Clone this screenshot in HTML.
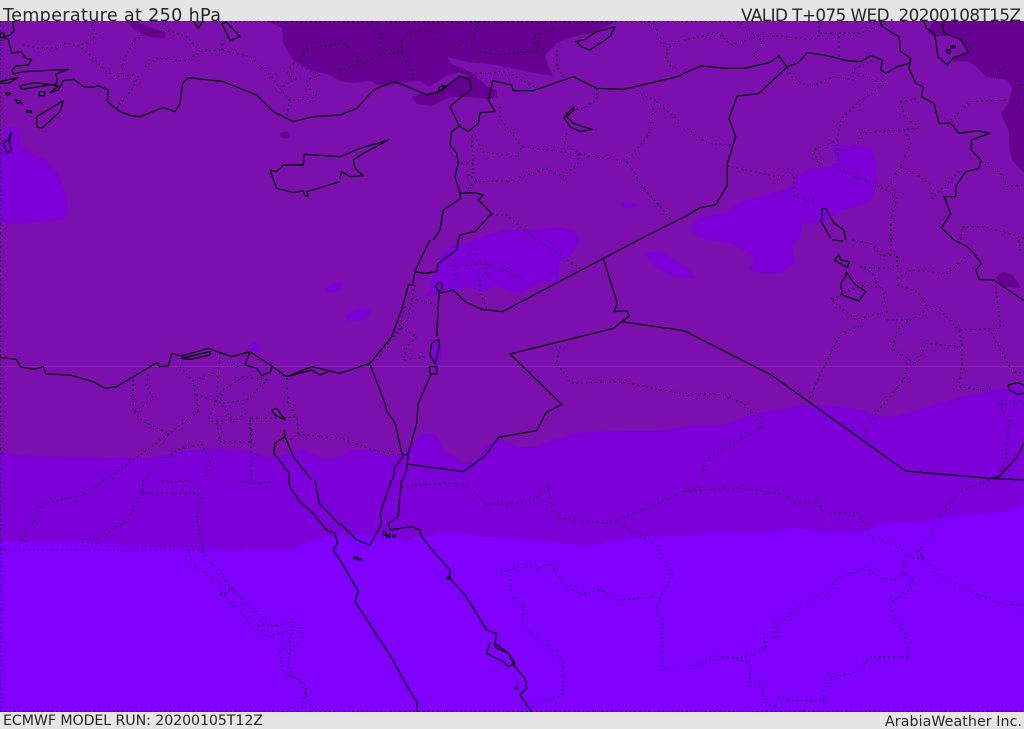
<!DOCTYPE html>
<html><head><meta charset="utf-8"><title>Temperature at 250 hPa</title>
<style>
html,body{margin:0;padding:0;background:#e5e5e5;width:1024px;height:729px;overflow:hidden}
svg{display:block}
path,polygon,ellipse{vector-effect:non-scaling-stroke}
.c{fill:none;stroke:#000;stroke-width:1.25;stroke-linejoin:round}
.d{fill:none;stroke:#000;stroke-width:1.2;stroke-dasharray:1.3 3.4;shape-rendering:crispEdges}
text{font-family:"DejaVu Sans","Liberation Sans",sans-serif;fill:#262626}
</style></head><body>
<svg width="1024" height="729" viewBox="0 0 1024 729" xmlns="http://www.w3.org/2000/svg">
<rect width="1024" height="729" fill="#e5e5e5"/>
<text x="3" y="21" font-size="17.6" textLength="218">Temperature at 250 hPa</text>
<text x="741" y="21" font-size="16.8" textLength="280">VALID T+075 WED. 20200108T15Z</text>
<text x="3" y="725" font-size="14.2" textLength="260">ECMWF MODEL RUN: 20200105T12Z</text>
<text x="885" y="726" font-size="14.2" textLength="137">ArabiaWeather Inc.</text>
<clipPath id="m"><rect x="0" y="21" width="1024" height="691"/></clipPath>
<g clip-path="url(#m)">
<rect x="0" y="21" width="1024" height="691" fill="#7b10ae"/>
<!-- dark north -->
<g fill="#660090">
<polygon points="125,21 135,30 150,37 165,38 166,33 150,27 135,21"/>
<polygon points="267,21 282,28 283,43 293,60 310,70 330,75 340,81 353,83 370,81 383,87 403,82 420,81 429,87 446,76 458,72 467,75 480,77 452,64 447,57 467,62 490,64 540,74 553,76 548,66 545,55 557,43 573,37 593,33 613,23 616,21"/>
<polygon points="412,97 420,94 429,93 440,90 457,77 472,75 480,80 488,87 497,90 497,97 488,99 470,97 450,97 431,106 417,104"/>
<polygon points="934,21 927,32 934,37 947,35 960,39 969,52 955,57 953,62 967,61 977,67 986,77 1007,80 1012,88 1009,103 1001,113 1009,132 1009,145 1012,160 1024,173 1024,21"/>
<ellipse cx="285" cy="135" rx="5.500" ry="3.500"/>
<polygon points="996,278 1000,273 1005,272 1012,275 1018,282 1021,288 1008,287 1000,285"/>
</g>
<!-- mid band -->
<g fill="#7e00d8">
<polygon points="0,452 17,455 67,457 127,458 150,458 187,450 200,450 227,449 253,452 270,458 283,455 303,449 323,459 340,457 350,450 373,450 390,457 403,453 420,435 435,433 443,450 465,463 480,457 485,447 498,438 517,447 533,447 553,440 583,432 623,431 657,431 684,426 717,426 737,420 754,413 777,410 801,405 834,406 861,410 881,417 894,417 924,408 957,398 991,390 1024,385 1024,712 0,712"/>
<polygon points="0,155 3,133 7,127 15,127 20,133 20,145 30,153 43,158 58,173 67,197 68,212 63,220 47,221 20,224 0,222"/>
<polygon points="690,230 693,224 700,218 727,212 740,202 777,192 793,187 797,175 811,168 831,167 837,160 832,145 857,146 871,147 875,160 877,183 872,198 861,206 841,210 831,217 822,223 802,223 800,237 792,247 795,263 782,273 767,274 748,270 753,263 752,255 733,244 700,238"/>
<polygon points="478,238 503,230 530,230 560,227 575,231 581,240 573,253 560,263 558,273 560,282 540,282 522,293 510,292 497,285 483,292 468,287 453,290 438,293 425,297 430,288 433,275 438,263 443,253 453,245 468,243"/>
<polygon points="645,255 650,252 660,251 675,260 690,270 697,279 673,277 657,268"/>
<ellipse cx="629" cy="205" rx="8.500" ry="2.800"/>
<ellipse cx="334" cy="288" rx="9" ry="4" transform="rotate(-22 334 288)"/>
<ellipse cx="358" cy="315" rx="13" ry="5.500" transform="rotate(-15 358 315)"/>
<ellipse cx="255" cy="347" rx="5" ry="5"/>
<ellipse cx="437" cy="352" rx="5" ry="14"/>
</g>
<!-- brightest -->
<polygon fill="#7f00ff" points="0,542 33,542 77,542 113,545 167,548 207,549 240,551 248,548 270,551 293,549 307,543 323,538 333,536 340,537 360,535 377,535 397,537 408,541 415,537 430,537 447,532 463,533 480,537 500,537 540,541 590,546 617,540 640,537 684,536 714,532 761,533 797,528 824,532 857,532 891,522 921,522 957,515 1001,513 1024,505 1024,712 0,712"/>
<rect x="0" y="366" width="1024" height="1" fill="#9a4ad0" opacity=".35"/>
<path class="d" d="M.5,21V712M0,21.500H1024M0,711.500H1024"/>
<!-- tile joins -->
<path class="c" d="M638,240L684,217M680,330L684,331M680,76L684,73M340,115L342,115M340,157L340,157"/>

<!-- tile 1 -->
<g transform="scale(.33333)">
<path class="d" d="M70,135L120,145 165,145 200,128 240,140 285,180 320,215 350,230 410,225M275,75L290,100 270,125 240,135M500,90L440,100 400,125 365,195 370,222M435,200L470,175 560,183 600,155 665,150 750,170 815,230 840,265M495,70L490,90M505,92L560,110 600,155M665,150L665,120M880,190L860,220 890,235 840,265 870,300 930,298 950,285 925,265 920,240 960,225M960,225L885,190M880,190L930,145 1020,130M415,228L395,270 350,325M868,300L860,355"/>
<path class="c" d="M38,64L42,92 30,106 5,112 25,118 35,160 62,155 78,175 95,178 85,195 48,198 35,212 40,222 70,215 205,208 168,222 172,243 165,255 100,248 60,258 65,268 150,255 175,258 150,278 175,270 190,242 222,238 250,260 280,262 295,257 325,270 322,305 360,335 395,347 420,350 490,322 525,335 540,310 548,250 565,233 670,245 770,285 820,335 880,365 940,350 1020,345"/>
<path class="c" d="M110,350L190,302 180,335 125,385 110,380ZM0,245L55,232 25,250 0,250ZM18,278h12v6h-12ZM118,275h16v12h-16ZM45,298l15,5 6,8-15,-3ZM80,332h14v5h-14ZM580,64L595,85 608,64M665,70L680,67 720,110 690,122ZM33,398L25,420 10,430 20,458 35,450 28,430ZM912,463L910,495 850,495 830,515 810,510 830,565 880,578 910,572 915,588 925,588 920,575 1020,545M912,463L1020,470M0,100h12v12h-12Z"/>
</g>
<!-- tile 2 -->
<g transform="translate(340,0) scale(.33333)">
<path class="d" d="M0,120L30,145 70,190M0,210L70,190 115,165 185,155 215,210 220,245M185,155L185,115 240,90 300,100 305,64M80,64L125,105 115,160M415,64L410,100 360,130 355,150M395,130L400,150 470,165 610,150M640,85L580,110 595,135M610,150L580,125M350,215L440,220 500,215 590,265M650,150L650,200 670,230M900,64L950,85 955,120 985,155 975,170 1005,220M990,140L1020,120M770,265L770,300 730,325 695,330M890,280L945,300 925,405 860,485 715,462 545,440 530,470 425,455 405,405 395,410 400,490 355,490M950,305L1020,365M860,485L885,520 900,550 990,655M715,462L715,490 670,530 620,505 510,542 430,545 410,540 380,570M400,490L400,520 385,525 410,540M680,400L675,430 715,462M480,320L480,355 530,420 545,440M455,645L500,645 540,680 590,720"/>
<path class="c" d="M0,345L50,325 100,270 160,245 190,255 262,285 300,275 360,228 390,240 395,270 370,285 330,320 358,378 335,395 330,435 350,460 355,490 345,530 360,580 362,595 310,630 300,690 280,720M358,378L385,395 415,370 420,338 465,335 445,300 458,242 515,255 520,272 580,272 700,230 770,265 850,268 1020,228M360,580L405,578 430,585 415,600 455,640 405,695 360,705 355,720M700,320L672,352 690,380 720,395 757,388 730,380 700,370 680,350 702,330ZM708,125L735,118 770,95 825,80 810,110 750,150 725,140ZM296,262l18,-6-8,14-10,2ZM0,470L60,445 145,420 70,460 40,480 45,505 70,528 30,530 5,515 0,535"/>
</g>
<!-- tile 3 -->
<g transform="translate(684,0) scale(.33333)">
<path class="d" d="M0,120L100,100 145,135 220,110 290,108 390,120 410,100 530,100 590,75M160,64L225,110 235,140 205,165 230,185M405,64L405,100M465,110L465,170M310,205L330,240 380,260 450,230 510,240 505,210 570,180M510,215L600,255 530,300 470,360 460,420 390,450 405,500M460,420L465,505 605,570 650,500 700,525 740,555 745,595 830,510M530,400L520,435 460,460M530,400L700,385 660,390 680,430 650,500M650,305L700,295M650,305L660,350 705,380M10,385L70,430 150,435M130,498L280,530 330,525 330,590 390,605M605,570L640,590 620,660 620,720M800,360L860,305 980,300 1020,315M890,485L950,520 970,560 1020,555M830,720L835,680 900,680 1020,715M920,225L960,205 1000,240 1020,270"/>
<path class="c" d="M0,220L50,198 130,205 180,205 255,188 285,168 308,200 340,190 370,158 420,165 490,182 530,185 560,167 595,180 590,210 605,220 640,200 675,190M310,200L225,280 160,288 135,355 155,410 130,490 130,555 95,615 50,622 0,652M590,64L595,80 645,110 650,155 680,175 675,205 695,250 718,260 712,290 750,310 765,370 800,370 825,400 880,392 917,400 862,420 862,450 890,480 885,505 845,515 815,560 815,590 780,590 800,640 772,683 800,710 810,720M720,64L728,85 750,100 755,120 762,170 790,195 810,172 853,157 830,118 780,100 775,68M800,138h14v6h-14ZM788,150h10v10h-10ZM415,625L425,625 450,670 480,690 485,720M415,625L412,665 440,715"/>
</g>
<!-- tile 4 -->
<g transform="translate(0,240) scale(.33333)">
<path class="d" d="M400,420L400,515 430,545 505,580M405,515L460,475 440,440 445,395M540,380L580,425 585,465M585,420L650,395M660,340L650,480 625,540M590,465L670,490 740,480 800,420M800,420L730,410 670,450 660,485M590,465L595,515M660,485L700,545 745,515M635,545L700,540M650,550L660,605 755,605 750,535 835,535 890,530 895,580 870,600M895,583L1020,595M750,535L755,720M595,515L320,720M430,720L530,630 605,612 630,660 620,720M690,360L720,385M815,380L860,415 865,490 890,530"/>
<path class="c" d="M0,352L50,358 60,380 100,388 130,380 138,402 210,405 280,425 315,445 350,440 470,368 480,380 505,378 515,340 545,348 625,325 695,350 750,335 815,378 860,410 935,380 1020,400M545,355L630,335 630,345 570,358ZM750,335L735,375 770,385 785,407 812,395 815,378M815,510L830,505 855,540 825,525ZM853,570L855,590 880,650 935,720M855,590L825,610 822,640 868,700 868,720M860,410L880,405 935,390 960,405 985,395M480,380L505,378"/>
</g>
<!-- tile 5 -->
<g transform="translate(340,240) scale(.33333)">
<path class="d" d="M110,360L180,260 230,290 200,320 190,360 260,350M225,135L215,175 290,195M195,200L180,260M215,175L205,235 165,290M340,60L350,120M350,80L430,70 520,100 560,130M420,120L420,155 440,205M440,70L440,100 415,120M395,25L395,40M410,25L410,40M600,5L720,85M660,320L650,370 695,430 840,425 1020,460M10,597L100,630 180,648"/>
<path class="c" d="M270,0L240,60 225,95 218,135 205,135 185,210 155,290 90,370 0,400M225,95L255,100 290,95 295,70 350,30 355,0M297,160L290,290M290,300L275,310 270,345 285,370 298,320 298,300ZM268,380L290,380 290,402 270,402ZM272,405L235,490 230,550 205,640M295,160L340,150 375,185 425,208 487,215 895,0M790,55L832,190 822,215 860,212 868,228 820,265 510,342 665,493 618,518 590,572 475,592 435,648 370,695 200,672M845,245L1020,270M90,372L135,490 140,512 165,550 187,645M187,648L205,640 200,690 188,720M190,650L165,680 158,720"/>
<ellipse class="c" cx="298" cy="140" rx="9" ry="13"/>
</g>
<!-- tile 6 -->
<g transform="translate(684,240) scale(.33333)">
<path class="d" d="M622,0L620,35 590,55M505,0L560,10 590,45 640,45 640,80 590,85 530,80 565,100 580,135 595,145 610,215 515,238 440,178 480,160 540,135 595,145M610,240L650,240 680,240 740,205 770,210 825,270 835,320 835,360 825,440 920,455 945,490 975,540 965,660 945,710M640,115L680,90 790,100 860,40M640,135L700,155 735,205M680,240L640,270 625,325 700,375 725,310 835,320M830,270L950,265 935,140M915,265L985,395 1020,400M525,260L470,280 420,380 375,480M670,370L660,420 575,520 530,600M5,460L100,462 180,490 235,560 65,660 55,715M950,495L1020,480M1005,0L1010,40"/>
<path class="c" d="M445,0L478,3M465,45L450,60 490,82 497,65 470,60ZM487,95L487,105 470,130 475,165 525,183 545,155 510,130ZM810,0L850,20 870,40 892,70 875,90 885,118 930,120 1020,182M0,272L262,405 665,693 920,715 945,710 1000,650 1020,610M920,715L1020,720M972,435L1000,428 1020,435M975,450L1000,462 1020,460M972,435L975,450"/>
</g>
<!-- tile 7 -->
<g transform="translate(0,480) scale(.33333)">
<path class="d" d="M310,0L270,40 130,70 55,200M430,0L425,40 590,40 605,50 590,110 610,215M425,40L380,125 260,190M0,210L610,210M565,210L575,255 640,295 670,345 760,440 800,470 880,450 870,480 840,520 850,580 900,600 940,690M605,215L650,265 700,335 750,380 785,410 810,440 880,425 905,440 910,480 870,510 865,560 880,590 920,620 905,690M660,345L700,325M760,440L800,430M485,0L520,8 560,0M710,0L760,12 810,5"/>
<path class="c" d="M865,0L870,20 900,65 935,95 980,150 1005,160 1012,190 1000,210 1020,240M945,0L958,70 1020,135"/>
</g>
<!-- tile 8 -->
<g transform="translate(340,480) scale(.33333)">
<path class="d" d="M185,20L340,8 385,20 435,72 570,70 625,25 635,85 660,115 790,130 825,125 950,195 1000,290 960,350 950,400 968,420 965,480 970,565 990,570 1020,560M825,125L1010,45M480,280L550,252 590,267 635,250 660,300 720,345 780,330 840,360 950,350M510,285L515,350 555,375 545,430 560,450 640,510 670,545 668,645 580,675 570,695"/>
<path class="c" d="M0,130L50,180 90,195 125,130 120,100 155,0M0,240L30,290 55,335 45,365 110,465 150,525 205,625 230,665 232,695M185,0L178,60 175,110 145,130 150,150 180,145 215,140 240,150 245,170 285,220 330,270 330,295 375,345 440,450 470,460 465,490 505,520 525,560 555,595 560,625 540,645 575,695M450,487L440,520 490,545 505,560 525,550 505,520 470,505 460,490M42,230h10v6h-10ZM55,236h8v5h-8ZM322,292h6v6h-6ZM526,622h8v5h-8ZM130,155h8v10h-8ZM140,166h10v5h-10Z"/>
<ellipse class="c" cx="163" cy="168" rx="5" ry="4"/>
</g>
<!-- tile 9 -->
<g transform="translate(684,480) scale(.33333)">
<path class="d" d="M0,35L50,20M5,35L150,22 300,42 335,70 405,68 420,100 520,97 565,170 650,200 680,235 720,235 750,275 850,330 950,370 1010,375 1018,395M915,0L830,35 780,90 740,165 705,210 715,235M660,245L655,278 680,290 690,318 625,365 618,405 660,450 672,530 560,530 520,575 450,590 420,630 420,665 315,660 285,652 265,690M655,278L630,300 590,295 545,262 460,295 430,335 350,375 310,415 275,430 275,475 240,470 245,510 160,535 90,527 40,555 10,557M160,535L198,550 198,605 235,620 245,665 265,680M720,235L700,210"/>
</g>
</g>
</svg>
</body></html>
